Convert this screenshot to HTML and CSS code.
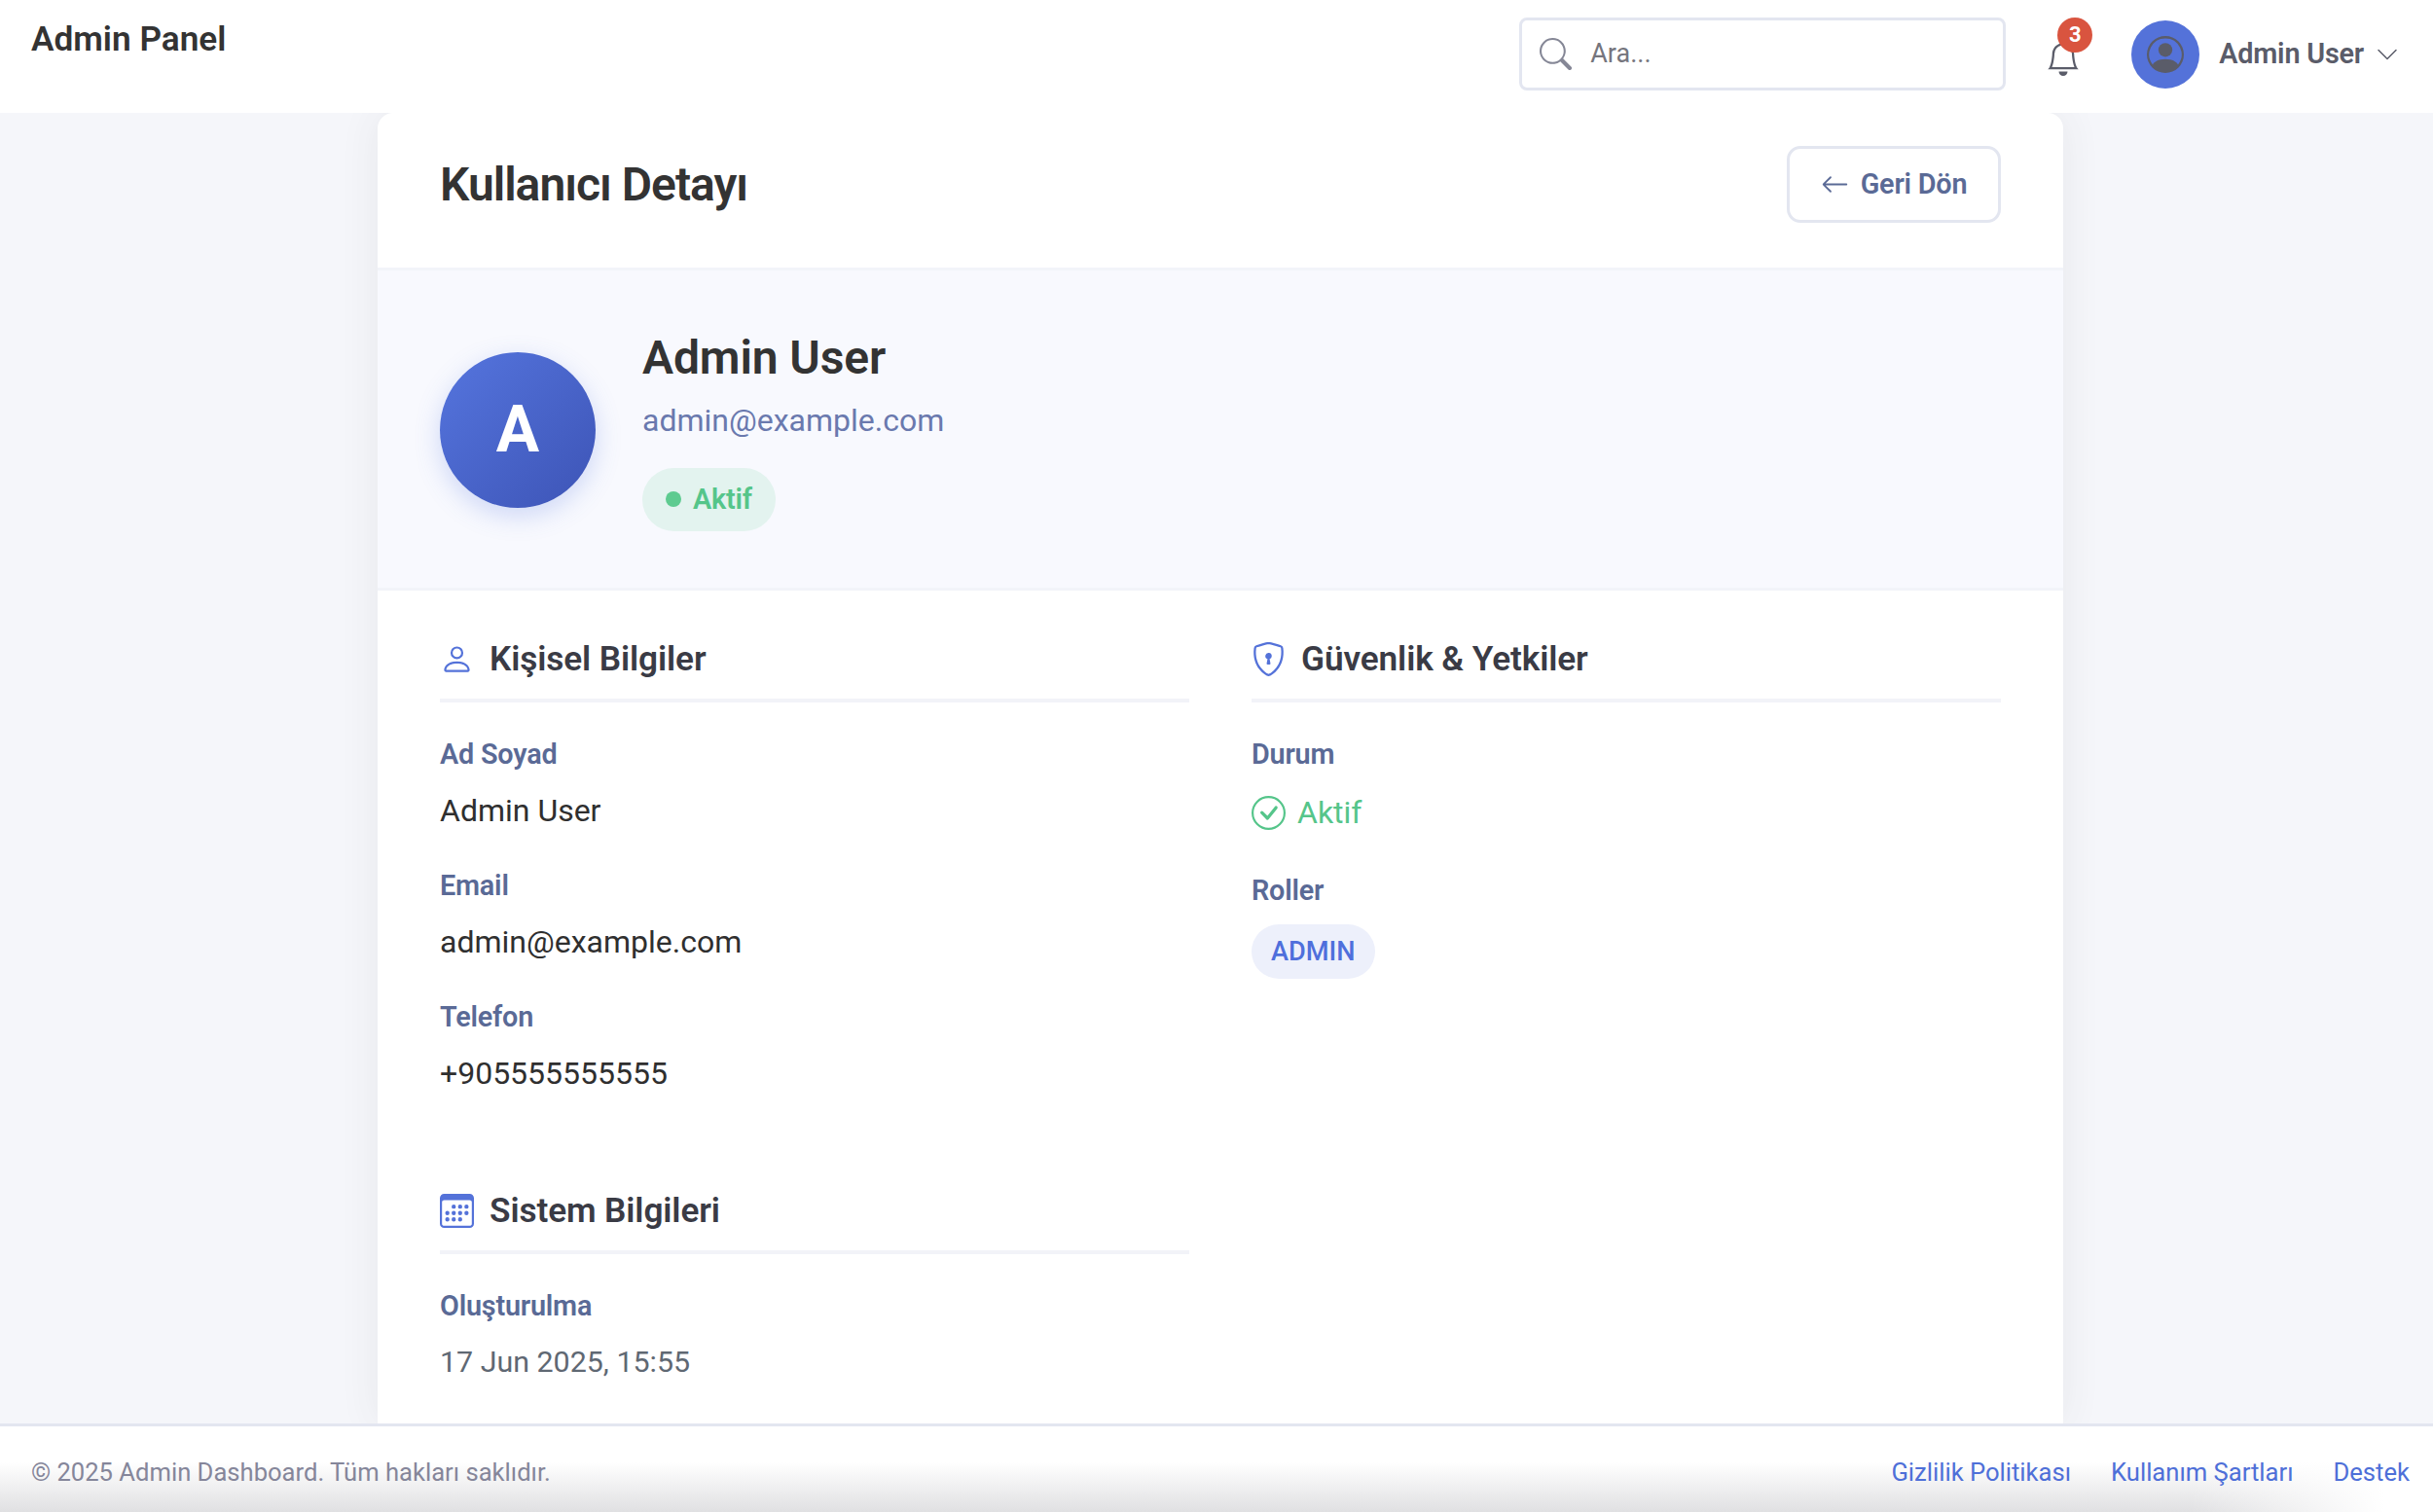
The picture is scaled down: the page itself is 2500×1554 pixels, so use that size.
FILE: index.html
```html
<!DOCTYPE html>
<html lang="tr">
	<head>
		<meta charset="utf-8">
		<meta name="viewport" content="width=device-width, initial-scale=1.0">
		<title>Kullanıcı Detayı</title>
		<link rel="stylesheet" href="styles.css">
	</head>

	<body>
		<header class="topbar">
			<div class="brand">Admin Panel</div>
			<div class="search">
				<svg class="search-icon" viewBox="0 0 16 16" fill="currentColor"><path d="M11.742 10.344a6.5 6.5 0 1 0-1.397 1.398h-.001c.03.04.062.078.098.115l3.85 3.85a1 1 0 0 0 1.415-1.414l-3.85-3.85a1.007 1.007 0 0 0-.115-.1zM12 6.5a5.5 5.5 0 1 1-11 0 5.5 5.5 0 0 1 11 0z"/></svg>
				<span class="search-text">Ara...</span>
			</div>
			<div class="bell">
				<svg class="bell-icon" viewBox="0 0 16 16" fill="currentColor"><path d="M8 16a2 2 0 0 0 2-2H6a2 2 0 0 0 2 2zM8 1.918l-.797.161A4.002 4.002 0 0 0 4 6c0 .628-.134 2.197-.459 3.742-.16.767-.376 1.566-.663 2.258h10.244c-.287-.692-.502-1.49-.663-2.258C12.134 8.197 12 6.628 12 6a4.002 4.002 0 0 0-3.203-3.92L8 1.917zM14.22 12c.223.447.481.801.78 1H1c.299-.199.557-.553.78-1C2.68 10.2 3 6.88 3 6c0-2.42 1.72-4.44 4.005-4.901a1 1 0 1 1 1.99 0A5.002 5.002 0 0 1 13 6c0 .88.32 4.2 1.22 6z"/></svg>
				<span class="bell-badge">3</span>
			</div>
			<div class="user">
				<span class="user-avatar">
					<svg class="user-icon" viewBox="0 0 16 16" fill="currentColor"><path d="M11 6a3 3 0 1 1-6 0 3 3 0 0 1 6 0z"/><path fill-rule="evenodd" d="M0 8a8 8 0 1 1 16 0A8 8 0 0 1 0 8zm8-7a7 7 0 0 0-5.468 11.37C3.242 11.226 4.805 10 8 10s4.757 1.225 5.468 2.37A7 7 0 0 0 8 1z"/></svg>
				</span>
				<span class="user-name">Admin User</span>
				<svg class="chevron" viewBox="0 0 16 16" fill="currentColor"><path fill-rule="evenodd" d="M1.646 4.646a.5.5 0 0 1 .708 0L8 10.293l5.646-5.647a.5.5 0 0 1 .708.708l-6 6a.5.5 0 0 1-.708 0l-6-6a.5.5 0 0 1 0-.708z"/></svg>
			</div>
		</header>

		<main class="content">
			<article class="card">
				<div class="card-head">
					<h1>Kullanıcı Detayı</h1>
					<a class="back-btn" href="#">
						<svg class="back-icon" viewBox="0 0 16 16" fill="currentColor"><path fill-rule="evenodd" d="M15 8a.5.5 0 0 0-.5-.5H2.707l3.147-3.146a.5.5 0 1 0-.708-.708l-4 4a.5.5 0 0 0 0 .708l4 4a.5.5 0 0 0 .708-.708L2.707 8.5H14.5A.5.5 0 0 0 15 8z"/></svg>
						Geri Dön
					</a>
				</div>

				<div class="hero">
					<div class="hero-avatar">A</div>
					<div class="hero-info">
						<h2>Admin User</h2>
						<p class="hero-mail">admin@example.com</p>
						<span class="hero-badge"><i class="dot"></i>Aktif</span>
					</div>
				</div>

				<div class="details">
					<section>
						<h3>
							<svg class="sec-icon" viewBox="0 0 16 16" fill="currentColor"><path d="M8 8a3 3 0 1 0 0-6 3 3 0 0 0 0 6zm2-3a2 2 0 1 1-4 0 2 2 0 0 1 4 0zm4 8c0 1-1 1-1 1H3s-1 0-1-1 1-4 6-4 6 3 6 4zm-1-.004c-.001-.246-.154-.986-.832-1.664C11.516 10.68 10.289 10 8 10c-2.29 0-3.516.68-4.168 1.332-.678.678-.83 1.418-.832 1.664h10z"/></svg>
							Kişisel Bilgiler
						</h3>
						<div class="field">
							<label>Ad Soyad</label>
							<div class="value">Admin User</div>
						</div>
						<div class="field">
							<label>Email</label>
							<div class="value">admin@example.com</div>
						</div>
						<div class="field">
							<label>Telefon</label>
							<div class="value">+905555555555</div>
						</div>
					</section>

					<section>
						<h3>
							<svg class="sec-icon" viewBox="0 0 16 16" fill="currentColor"><path d="M5.338 1.59a61.44 61.44 0 0 0-2.837.856.481.481 0 0 0-.328.39c-.554 4.157.726 7.19 2.253 9.188a10.725 10.725 0 0 0 2.287 2.233c.346.244.652.42.893.533.12.057.218.095.293.118a.55.55 0 0 0 .101.025.615.615 0 0 0 .1-.025c.076-.023.174-.061.294-.118.24-.113.547-.29.893-.533a10.726 10.726 0 0 0 2.287-2.233c1.527-1.997 2.807-5.031 2.253-9.188a.48.48 0 0 0-.328-.39c-.651-.213-1.75-.56-2.837-.855C9.552 1.29 8.531 1.067 8 1.067c-.53 0-1.552.223-2.662.524zM5.072.56C6.157.265 7.31 0 8 0s1.843.265 2.928.56c1.11.3 2.229.655 2.887.87a1.54 1.54 0 0 1 1.044 1.262c.596 4.477-.787 7.795-2.465 9.99a11.775 11.775 0 0 1-2.517 2.453 7.159 7.159 0 0 1-1.048.625c-.28.132-.581.24-.829.24s-.548-.108-.829-.24a7.158 7.158 0 0 1-1.048-.625 11.777 11.777 0 0 1-2.517-2.453C1.928 10.487.545 7.169 1.141 2.692A1.54 1.54 0 0 1 2.185 1.43 62.456 62.456 0 0 1 5.072.56z"/><path d="M9.5 6.5a1.5 1.5 0 0 1-1 1.415l.385 1.99a.5.5 0 0 1-.491.595h-.788a.5.5 0 0 1-.49-.595l.384-1.99a1.5 1.5 0 1 1 2-1.415z"/></svg>
							Güvenlik &amp; Yetkiler
						</h3>
						<div class="field">
							<label>Durum</label>
							<div class="status">
								<svg class="status-icon" viewBox="0 0 16 16" fill="currentColor"><path d="M8 15A7 7 0 1 1 8 1a7 7 0 0 1 0 14zm0 1A8 8 0 1 0 8 0a8 8 0 0 0 0 16z"/><path d="M10.97 4.97a.235.235 0 0 0-.02.022L7.477 9.417 5.384 7.323a.75.75 0 0 0-1.06 1.06L6.97 11.03a.75.75 0 0 0 1.079-.02l3.992-4.99a.75.75 0 0 0-1.071-1.05z"/></svg>
								Aktif
							</div>
						</div>
						<div class="field">
							<label>Roller</label>
							<span class="role">ADMIN</span>
						</div>
					</section>

					<section>
						<h3>
							<svg class="sec-icon" viewBox="0 0 16 16" fill="currentColor"><path d="M14 0H2a2 2 0 0 0-2 2v12a2 2 0 0 0 2 2h12a2 2 0 0 0 2-2V2a2 2 0 0 0-2-2zM1 3.857C1 3.384 1.448 3 2 3h12c.552 0 1 .384 1 .857v10.286c0 .473-.448.857-1 .857H2c-.552 0-1-.384-1-.857V3.857z"/><path d="M6.5 7a1 1 0 1 0 0-2 1 1 0 0 0 0 2zm3 0a1 1 0 1 0 0-2 1 1 0 0 0 0 2zm3 0a1 1 0 1 0 0-2 1 1 0 0 0 0 2zm-9 3a1 1 0 1 0 0-2 1 1 0 0 0 0 2zm3 0a1 1 0 1 0 0-2 1 1 0 0 0 0 2zm3 0a1 1 0 1 0 0-2 1 1 0 0 0 0 2zm3 0a1 1 0 1 0 0-2 1 1 0 0 0 0 2zm-9 3a1 1 0 1 0 0-2 1 1 0 0 0 0 2zm3 0a1 1 0 1 0 0-2 1 1 0 0 0 0 2zm3 0a1 1 0 1 0 0-2 1 1 0 0 0 0 2z"/></svg>
							Sistem Bilgileri
						</h3>
						<div class="field">
							<label>Oluşturulma</label>
							<div class="value muted">17 Jun 2025, 15:55</div>
						</div>
					</section>
				</div>
			</article>
		</main>

		<footer class="footer">
			<span class="copy">© 2025 Admin Dashboard. Tüm hakları saklıdır.</span>
			<nav class="foot-links">
				<a href="#">Gizlilik Politikası</a>
				<a href="#">Kullanım Şartları</a>
				<a href="#">Destek</a>
			</nav>
		</footer>
	</body>
</html>
```
FILE: styles.css
```css
*{
	box-sizing: border-box;
}
html, body{
	height: 100%;
}
body{
	margin: 0;
	display: flex;
	flex-direction: column;
	overflow: hidden;
	background-color: #f5f6fa;
	color: #333;
	font-family: Roboto, "Liberation Sans", sans-serif;
}
a{
	text-decoration: none;
}

/* top bar */
.topbar{
	flex: none;
	height: 116px;
	display: flex;
	align-items: center;
	padding: 0 35px 0 32px;
	background-color: white;
}
.brand{
	align-self: flex-start;
	margin-top: 18px;
	margin-right: auto;
	font-size: 35.2px;
	line-height: 44px;
	font-weight: 600;
}
.search{
	width: 500px;
	height: 75px;
	margin-top: -6px;
	display: flex;
	align-items: center;
	padding-left: 18px;
	border: 3px solid #e3e6f0;
	border-radius: 8px;
	color: #75757d;
	font-size: 27px;
}
.search-icon{
	width: 33px;
	height: 33px;
	margin-right: 19px;
	color: #858796;
}
.bell{
	position: relative;
	width: 36px;
	height: 36px;
	margin: 4px 0 0 41px;
	color: #5a5c69;
}
.bell-icon{
	width: 36px;
	height: 36px;
	display: block;
}
.bell-badge{
	position: absolute;
	top: -24px;
	left: 12px;
	width: 36px;
	height: 36px;
	border-radius: 50%;
	background-color: #d9543f;
	color: white;
	font-size: 22px;
	font-weight: 700;
	line-height: 36px;
	text-align: center;
}
.user{
	display: flex;
	align-items: center;
	margin: -4px 0 0 52px;
	color: #5a5c69;
}
.user-avatar{
	width: 70px;
	height: 70px;
	display: flex;
	align-items: center;
	justify-content: center;
	border-radius: 50%;
	background-color: #5472d9;
}
.user-icon{
	width: 38px;
	height: 38px;
}
.user-name{
	margin: 0 0 2px 20px;
	font-size: 28.8px;
	font-weight: 600;
	letter-spacing: -.2px;
}
.chevron{
	width: 24px;
	height: 24px;
	margin-left: 12px;
}

/* card */
.content{
	flex: 1;
	min-height: 0;
	overflow: hidden;
	padding-left: 388px;
}
.card{
	width: 1732px;
	min-height: 100%;
	background-color: white;
	border-radius: 16px 16px 0 0;
	box-shadow: 0 0 40px rgba(58, 59, 69, .08);
}
.card-head{
	height: 162px;
	display: flex;
	align-items: center;
	justify-content: space-between;
	padding: 0 64px 13px;
	border-bottom: 3px solid #f2f4f9;
}
h1{
	margin: 0;
	font-size: 48px;
	font-weight: 600;
	letter-spacing: -1px;
}
.back-btn{
	width: 220px;
	height: 79px;
	display: flex;
	align-items: center;
	justify-content: center;
	gap: 12px;
	border: 3px solid #e3e6f0;
	border-radius: 14px;
	color: #5a6a96;
	font-size: 28.8px;
	font-weight: 600;
	letter-spacing: -.2px;
}
.back-icon{
	width: 29px;
	height: 29px;
}

/* profile strip */
.hero{
	height: 329px;
	display: flex;
	align-items: center;
	gap: 48px;
	padding: 1px 64px 0;
	background-color: #f8f9fe;
	border-bottom: 3px solid #f2f4f9;
}
.hero-avatar{
	width: 160px;
	height: 160px;
	display: flex;
	align-items: center;
	justify-content: center;
	border-radius: 50%;
	background: linear-gradient(135deg, #5575de, #3d54b6);
	box-shadow: 0 8px 26px rgba(78, 115, 223, .25);
	color: white;
	font-size: 66px;
	font-weight: 700;
}
.hero-info h2{
	margin: 0;
	font-size: 48px;
	line-height: 60px;
	font-weight: 600;
	letter-spacing: -.1px;
}
.hero-mail{
	margin: 12px 0 27px;
	color: #6a79ae;
	font-size: 32px;
	line-height: 44px;
}
.hero-badge{
	display: inline-flex;
	align-items: center;
	height: 65px;
	padding: 0 24px;
	border-radius: 33px;
	background-color: #e3f3ef;
	color: #55c58a;
	font-size: 28.8px;
	font-weight: 600;
	letter-spacing: -.2px;
}
.dot{
	width: 16px;
	height: 16px;
	margin-right: 12px;
	border-radius: 50%;
	background-color: #5ecb90;
}

/* detail sections */
.details{
	display: grid;
	grid-template-columns: 1fr 1fr;
	column-gap: 64px;
	row-gap: 61px;
	padding: 48px 64px 0;
}
h3{
	display: flex;
	align-items: center;
	gap: 16px;
	height: 67px;
	margin: 0 0 34px;
	padding-bottom: 19px;
	border-bottom: 4px solid #f2f3f8;
	color: #3a3b45;
	font-size: 35.2px;
	line-height: 44px;
	font-weight: 600;
	letter-spacing: -.1px;
}
.sec-icon{
	width: 35px;
	height: 35px;
	color: #5472d9;
}
.field{
	margin-bottom: 36px;
}
label{
	display: block;
	margin-bottom: 17px;
	color: #5a6a96;
	font-size: 28.8px;
	line-height: 38px;
	font-weight: 600;
	letter-spacing: -.2px;
}
.value{
	font-size: 32px;
	line-height: 44px;
	color: #2f2f2f;
}
.value.muted{
	color: #5f6873;
	font-size: 30.4px;
}
.status{
	display: flex;
	align-items: center;
	gap: 12px;
	height: 50px;
	margin-top: -1px;
	color: #55c58a;
	font-size: 32px;
}
.status-icon{
	width: 35px;
	height: 35px;
}
.role{
	display: inline-block;
	height: 56px;
	margin-top: -1px;
	padding: 0 20px;
	border-radius: 28px;
	background-color: #edf0fb;
	color: #4f6fdc;
	font-size: 27.2px;
	line-height: 56px;
	font-weight: 500;
}

/* footer */
.footer{
	flex: none;
	height: 91px;
	display: flex;
	align-items: center;
	justify-content: space-between;
	padding: 6px 24px 0 32px;
	border-top: 3px solid #e3e6f0;
	background: linear-gradient(to right, rgba(255, 255, 255, 0) 90%, #fff 98%), linear-gradient(#fff 42%, #e0e0e2);
	font-size: 25.6px;
}
.copy{
	color: #85869a;
}
.foot-links{
	display: flex;
	gap: 41px;
}
.foot-links a{
	color: #4e6fd8;
}
```
